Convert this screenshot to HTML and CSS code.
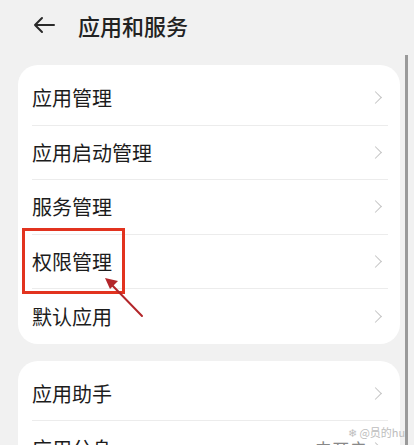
FILE: index.html
```html
<!DOCTYPE html>
<html lang="zh-CN">
<head>
    <meta charset="UTF-8">
    <meta name="viewport" content="width=device-width, initial-scale=1.0">
    <link rel="stylesheet" href="styles.css">
    <title>应用和服务</title>
</head>
<body>
    <div class="page">
        <div class="header">
            <svg class="back" width="24" height="18" viewBox="0 0 24 18">
                <path d="M22 9H3M10 2L3 9l7 7" fill="none" stroke="#2a2a2a" stroke-width="2" stroke-linecap="round" stroke-linejoin="round"/>
            </svg>
            <h1>应用和服务</h1>
        </div>

        <div class="card">
            <div class="row"><span>应用管理</span><i class="chev"></i></div>
            <div class="row"><span>应用启动管理</span><i class="chev"></i></div>
            <div class="row"><span>服务管理</span><i class="chev"></i></div>
            <div class="row marked">
                <span>权限管理</span><i class="chev"></i>
                <div class="mark-box"></div>
                <svg class="mark-arrow" width="44" height="46" viewBox="0 0 44 46">
                    <path d="M40 42L8 9" stroke="#b3262a" stroke-width="2" stroke-linecap="round"/>
                    <path d="M3 4l13 3-8 8z" fill="#b3262a"/>
                </svg>
            </div>
            <div class="row last"><span>默认应用</span><i class="chev"></i></div>
        </div>

        <div class="card">
            <div class="row"><span>应用助手</span><i class="chev"></i></div>
            <div class="row last"><span>应用分身</span><em class="value">未开启</em><i class="chev"></i></div>
        </div>

        <div class="scrollbar"></div>
        <div class="watermark">&#10052; @员的hu</div>
    </div>
</body>
</html>
```

FILE: styles.css
```css
body {
    margin: 0;
    background-color: #f1f1f1;
    font-family: "Noto Sans CJK SC", "Noto Sans", sans-serif;
    color: #1c1c1c;
    overflow: hidden;
}

.page {
    position: relative;
    height: 445px;
    padding: 0 14px 0 18px;
    border-left: 6px solid #e9e9e9;
    margin-left: -6px;
}

.header {
    display: flex;
    align-items: center;
    height: 50px;
    padding-left: 14px;
    margin-bottom: 15px;
}

.back {
    margin-right: 22px;
}

h1 {
    margin: 0;
    font-size: 22px;
    font-weight: 500;
    color: #222;
}

.card {
    background-color: #fff;
    border-radius: 20px;
    padding: 6px 0 0;
    margin-bottom: 17px;
}

.row {
    position: relative;
    display: flex;
    align-items: center;
    height: 54.5px;
    margin: 0 12px 0 14px;
    border-bottom: 1px solid #ececec;
    box-sizing: border-box;
    font-size: 20px;
}

.row.last {
    border-bottom: none;
}

.row span {
    flex: 1;
}

.value {
    font-style: normal;
    font-size: 17.5px;
    color: #888;
    margin-right: 4px;
}

.chev {
    width: 8px;
    height: 8px;
    border-top: 1.5px solid #c4c4c4;
    border-right: 1.5px solid #c4c4c4;
    transform: rotate(45deg);
    margin-right: 8px;
}

.mark-box {
    position: absolute;
    left: -10px;
    top: -7px;
    width: 97px;
    height: 60px;
    border: 3px solid #e2331f;
}

.mark-arrow {
    position: absolute;
    left: 70px;
    top: 39px;
}

.scrollbar {
    position: absolute;
    left: 405px;
    top: 55px;
    width: 3px;
    height: 400px;
    background-color: #9a9a9a;
}

.watermark {
    position: absolute;
    left: 348px;
    top: 424px;
    font-size: 11px;
    color: #bdbdbd;
    white-space: nowrap;
}
```
